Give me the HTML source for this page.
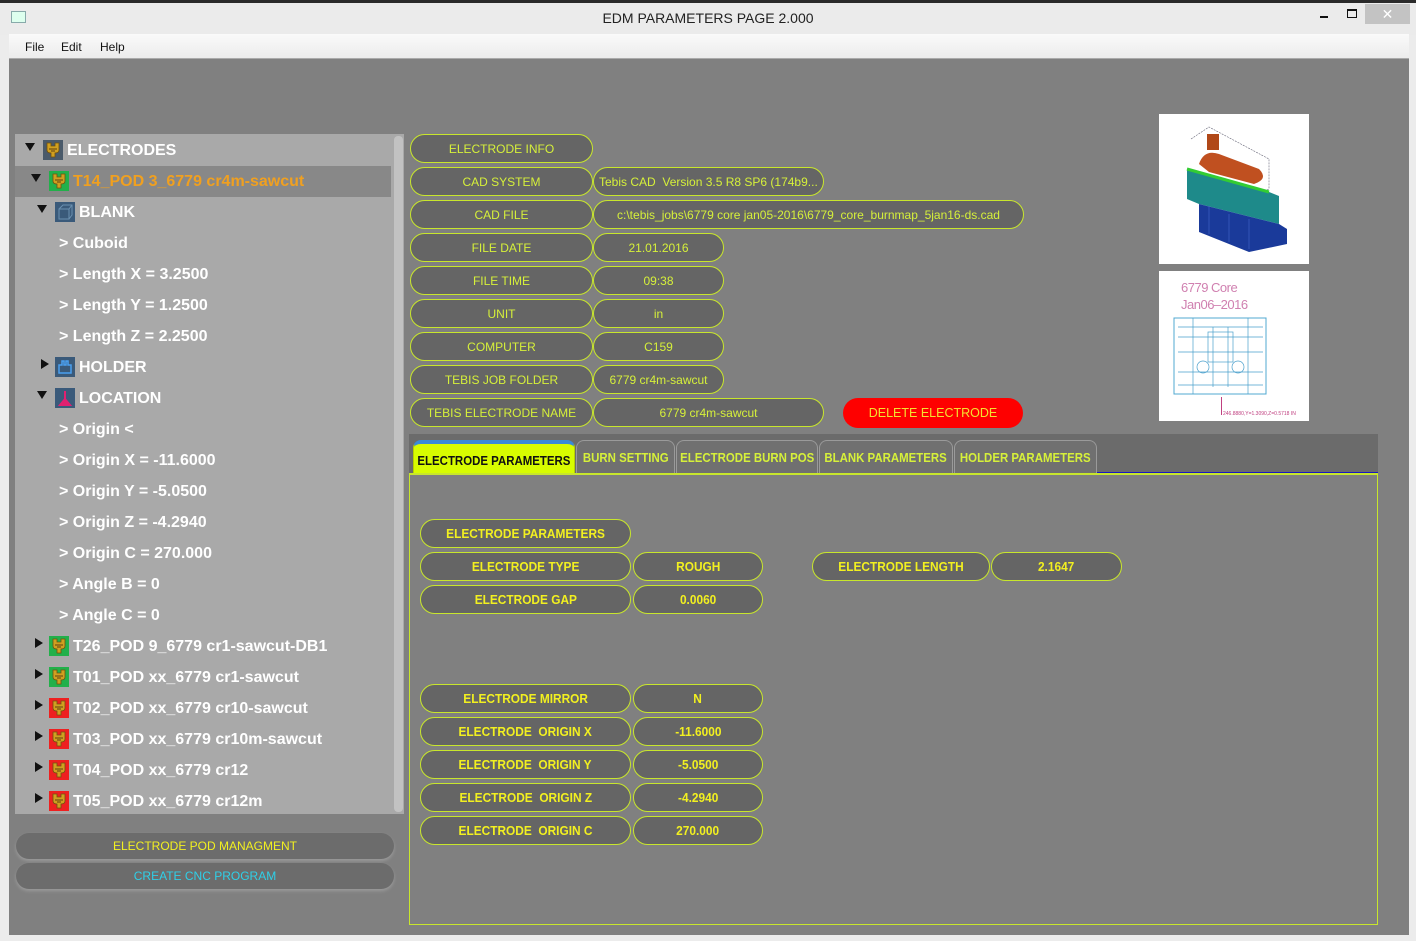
<!DOCTYPE html>
<html><head><meta charset="utf-8">
<style>
*{margin:0;padding:0;box-sizing:border-box}
body{width:1416px;height:941px;overflow:hidden;background:#ececec;font-family:"Liberation Sans",sans-serif;position:relative}
.a{position:absolute}
.btn{position:absolute;height:29px;border:1.5px solid #c8e62c;border-radius:15px;background:#656565;color:#d6f03a;font-size:12px;display:flex;align-items:center;justify-content:center;white-space:nowrap;overflow:hidden}
.pb{position:absolute;height:29px;border:1.5px solid #c8e62c;border-radius:15px;background:#656565;color:#f2f020;font-size:12.5px;font-weight:bold;display:flex;align-items:center;justify-content:center;white-space:nowrap}
.pb span{display:inline-block;transform:scaleX(.95);white-space:nowrap}
.tab span,.tab0 span{display:inline-block;transform:scaleX(.88);white-space:nowrap}
.row{position:absolute;left:0;height:31px;width:376px;display:flex;align-items:center;color:#fff;font-weight:bold;font-size:16px;font-family:"Liberation Sans",sans-serif;white-space:nowrap}
.arr{width:0;height:0;position:absolute}
.ad{border-left:5px solid transparent;border-right:5px solid transparent;border-top:8px solid #111}
.ar{border-top:5px solid transparent;border-bottom:5px solid transparent;border-left:8px solid #111}
.ic{position:absolute;width:20px;height:20px;display:flex;align-items:center;justify-content:center}
.tab{position:absolute;top:440px;height:34px;border:1px solid #9a9a9a;border-bottom:none;border-radius:8px 8px 0 0;background:#707070;color:#d6f03a;font-weight:bold;font-size:13px;display:flex;align-items:center;justify-content:center;white-space:nowrap;overflow:hidden}
.tab0{position:absolute;left:413px;top:440px;width:162px;height:34px;background:#d8fc00;border:1px solid #b8d000;border-radius:8px 8px 0 0;border-top:4px solid #3a8ad8;color:#111;font-weight:bold;font-size:13px;display:flex;align-items:center;justify-content:center;white-space:nowrap;overflow:hidden;padding-top:3px}
</style></head><body>
<div class="a" style="left:0;top:0;width:1416px;height:4px;background:#2a2a2a"></div>
<div class="a" style="left:0;top:3px;width:1416px;height:32px;background:#ebebeb"></div>
<div class="a" style="left:11px;top:11px;width:15px;height:12px;border:1px solid #8aa;background:#dfe"></div>
<div class="a" style="left:0;top:10px;width:1416px;text-align:center;font-size:14px;color:#222">EDM PARAMETERS PAGE 2.000</div>
<div class="a" style="left:1320px;top:16px;width:8px;height:2px;background:#111"></div>
<div class="a" style="left:1347px;top:9px;width:10px;height:9px;border:1.5px solid #111;border-top-width:2.5px"></div>
<div class="a" style="left:1365px;top:4px;width:45px;height:20px;background:#c3c3c3;color:#fff;font-size:14px;text-align:center;line-height:20px">✕</div>
<div class="a" style="left:9px;top:34px;width:1400px;height:25px;background:linear-gradient(#fafafa,#ececec);border-bottom:1px solid #aaa"></div>
<div class="a" style="left:25px;top:40px;font-size:12px;color:#111">File</div>
<div class="a" style="left:61px;top:40px;font-size:12px;color:#111">Edit</div>
<div class="a" style="left:100px;top:40px;font-size:12px;color:#111">Help</div>
<div class="a" style="left:9px;top:59px;width:1400px;height:876px;background:#808080"></div>

<div class="a" style="left:15px;top:134px;width:389px;height:680px;background:#a9a9a9;overflow:hidden">
<div class="a" style="left:379px;top:2px;width:9px;height:676px;background:#c2c2c2;border-radius:4px"></div>
<div class="a" style="left:0;top:32px;width:376px;height:31px;background:#888"></div>
<div id="tree"></div>
</div>

<div class="a" style="left:16px;top:833px;width:378px;height:26px;border-radius:13px;background:#6c6c6c;box-shadow:0 2px 3px #9a9a9a;color:#f2f020;font-size:12px;text-align:center;line-height:26px">ELECTRODE POD MANAGMENT</div>
<div class="a" style="left:16px;top:863px;width:378px;height:26px;border-radius:13px;background:#6c6c6c;box-shadow:0 2px 3px #9a9a9a;color:#2ed0e8;font-size:12px;text-align:center;line-height:26px">CREATE CNC PROGRAM</div>

<div class="btn" style="left:410px;top:134px;width:183px">ELECTRODE INFO</div>
<div class="btn" style="left:410px;top:167px;width:183px">CAD SYSTEM</div>
<div class="btn" style="left:593px;top:167px;width:231px;justify-content:flex-start;padding-left:5px">Tebis CAD&nbsp; Version 3.5 R8 SP6 (174b9...</div>
<div class="btn" style="left:410px;top:200px;width:183px">CAD FILE</div>
<div class="btn" style="left:593px;top:200px;width:431px">c:\tebis_jobs\6779 core jan05-2016\6779_core_burnmap_5jan16-ds.cad</div>
<div class="btn" style="left:410px;top:233px;width:183px">FILE DATE</div>
<div class="btn" style="left:593px;top:233px;width:131px">21.01.2016</div>
<div class="btn" style="left:410px;top:266px;width:183px">FILE TIME</div>
<div class="btn" style="left:593px;top:266px;width:131px">09:38</div>
<div class="btn" style="left:410px;top:299px;width:183px">UNIT</div>
<div class="btn" style="left:593px;top:299px;width:131px">in</div>
<div class="btn" style="left:410px;top:332px;width:183px">COMPUTER</div>
<div class="btn" style="left:593px;top:332px;width:131px">C159</div>
<div class="btn" style="left:410px;top:365px;width:183px">TEBIS JOB FOLDER</div>
<div class="btn" style="left:593px;top:365px;width:131px">6779 cr4m-sawcut</div>
<div class="btn" style="left:410px;top:398px;width:183px">TEBIS ELECTRODE NAME</div>
<div class="btn" style="left:593px;top:398px;width:231px">6779 cr4m-sawcut</div>
<div class="a" style="left:843px;top:398px;width:180px;height:30px;border-radius:15px;background:#fe0000;color:#f4e030;font-size:12.5px;text-align:center;line-height:30px">DELETE ELECTRODE</div>

<div class="a" style="left:1159px;top:114px;width:150px;height:150px;background:#fff">
<svg width="150" height="150" viewBox="0 0 150 150">
<path d="M32 25 L50 13 L110 45 L110 75 L100 80" fill="none" stroke="#667" stroke-width=".6" stroke-dasharray="2 1"/>
<path d="M40 50 Q45 35 60 40 L100 55 Q110 65 95 70 L50 58 Z" fill="#c05020"/>
<rect x="48" y="20" width="12" height="16" fill="#b04818"/>
<path d="M28 55 L110 78 L120 82 L120 110 L40 90 L28 85 Z" fill="#1e8a8a"/>
<path d="M28 55 L110 78" stroke="#3c3" stroke-width="3"/>
<path d="M40 90 L120 110 L128 115 L128 130 L90 138 L40 118 Z" fill="#1a3a9a"/>
<path d="M50 92 L50 120 M70 100 L70 128 M90 105 L90 135" stroke="#4466cc" stroke-width=".6"/>
</svg></div>
<div class="a" style="left:1159px;top:271px;width:150px;height:150px;background:#fff">
<div class="a" style="left:22px;top:8px;color:#d080b0;font-size:13px;line-height:17px;letter-spacing:-0.5px">6779 Core<br>Jan06–2016</div>
<svg class="a" style="left:14px;top:46px" width="100" height="80" viewBox="0 0 100 80">
<rect x="1" y="1" width="92" height="76" fill="none" stroke="#50a8d0" stroke-width="1"/>
<g stroke="#4aa0cc" stroke-width=".7" fill="none">
<path d="M5 10 H90 M5 20 H90 M5 35 H90 M5 55 H90 M5 68 H90 M20 1 V77 M40 10 V70 M55 10 V70 M75 1 V77"/>
<circle cx="30" cy="50" r="6"/><circle cx="65" cy="50" r="6"/><rect x="35" y="15" width="25" height="30"/>
</g></svg>
<div class="a" style="left:62px;top:126px;width:1px;height:18px;background:#c04080"></div>
<div class="a" style="left:64px;top:140px;font-size:5px;color:#c04080">246.8880,Y=1.3090,Z=0.5718 IN</div>
</div>

<div class="a" style="left:409px;top:434px;width:969px;height:40px;background:#6b6b6b"></div>
<div class="a" style="left:1097px;top:472px;width:281px;height:2px;background:#1818c0"></div>
<div class="tab0"><span>ELECTRODE PARAMETERS</span></div>
<div class="tab" style="left:576px;width:99px"><span>BURN SETTING</span></div>
<div class="tab" style="left:676px;width:142px"><span>ELECTRODE BURN POS</span></div>
<div class="tab" style="left:819px;width:134px"><span>BLANK PARAMETERS</span></div>
<div class="tab" style="left:954px;width:143px"><span>HOLDER PARAMETERS</span></div>
<div class="a" style="left:409px;top:473px;width:969px;height:452px;border:1.5px solid #c8e62c;border-top:2px solid #c8e62c"></div>

<div class="pb" style="left:420px;top:519px;width:211px"><span>ELECTRODE PARAMETERS</span></div>
<div class="pb" style="left:420px;top:552px;width:211px"><span>ELECTRODE TYPE</span></div>
<div class="pb" style="left:633px;top:552px;width:130px"><span>ROUGH</span></div>
<div class="pb" style="left:812px;top:552px;width:178px"><span>ELECTRODE LENGTH</span></div>
<div class="pb" style="left:991px;top:552px;width:131px"><span>2.1647</span></div>
<div class="pb" style="left:420px;top:585px;width:211px"><span>ELECTRODE GAP</span></div>
<div class="pb" style="left:633px;top:585px;width:130px"><span>0.0060</span></div>
<div class="pb" style="left:420px;top:684px;width:211px"><span>ELECTRODE MIRROR</span></div>
<div class="pb" style="left:633px;top:684px;width:130px"><span>N</span></div>
<div class="pb" style="left:420px;top:717px;width:211px"><span>ELECTRODE&nbsp; ORIGIN X</span></div>
<div class="pb" style="left:633px;top:717px;width:130px"><span>-11.6000</span></div>
<div class="pb" style="left:420px;top:750px;width:211px"><span>ELECTRODE&nbsp; ORIGIN Y</span></div>
<div class="pb" style="left:633px;top:750px;width:130px"><span>-5.0500</span></div>
<div class="pb" style="left:420px;top:783px;width:211px"><span>ELECTRODE&nbsp; ORIGIN Z</span></div>
<div class="pb" style="left:633px;top:783px;width:130px"><span>-4.2940</span></div>
<div class="pb" style="left:420px;top:816px;width:211px"><span>ELECTRODE&nbsp; ORIGIN C</span></div>
<div class="pb" style="left:633px;top:816px;width:130px"><span>270.000</span></div>

<script>
var ico='<svg width="14" height="16" viewBox="0 0 14 16"><path d="M1 1 H5 V4 H9 V1 H13 V8 Q13 11 9 11 V15 H5 V11 Q1 11 1 8 Z" fill="#d0a020" stroke="#705010" stroke-width=".8"/><path d="M3 7 H11 M5 9 H9" stroke="#604010"/></svg>';
var rows=[
[15,'d',28,'#4a5a6a',ico,'ELECTRODES','#fff'],
[21,'d',34,'#22b04a',ico,'T14_POD 3_6779 cr4m-sawcut','#f0a020'],
[27,'d',40,'#3a5a7a','<svg width="16" height="16"><rect x="2" y="5" width="10" height="10" fill="none" stroke="#6a90b0"/><path d="M2 5 L6 1 H15 V11 L12 15 M12 5 L15 1" fill="none" stroke="#6a90b0"/></svg>','BLANK','#fff'],
[44,null,0,null,null,'&gt; Cuboid','#fff'],
[44,null,0,null,null,'&gt; Length X = 3.2500','#fff'],
[44,null,0,null,null,'&gt; Length Y = 1.2500','#fff'],
[44,null,0,null,null,'&gt; Length Z = 2.2500','#fff'],
[27,'r',40,'#3a5a7a','<svg width="16" height="16"><path d="M2 14 V6 H5 V2 H7 V6 H9 V2 H11 V6 H14 V14 Z" fill="none" stroke="#4aa0f0" stroke-width="1.5"/></svg>','HOLDER','#fff'],
[27,'d',40,'#3a5a7a','<svg width="16" height="16"><path d="M8 1 V10 M3 15 L8 9 L13 15 Z" stroke="#e02070" fill="#e02070" stroke-width="2"/></svg>','LOCATION','#fff'],
[44,null,0,null,null,'&gt; Origin &lt;','#fff'],
[44,null,0,null,null,'&gt; Origin X = -11.6000','#fff'],
[44,null,0,null,null,'&gt; Origin Y = -5.0500','#fff'],
[44,null,0,null,null,'&gt; Origin Z = -4.2940','#fff'],
[44,null,0,null,null,'&gt; Origin C = 270.000','#fff'],
[44,null,0,null,null,'&gt; Angle B = 0','#fff'],
[44,null,0,null,null,'&gt; Angle C = 0','#fff'],
[21,'r',34,'#22b04a',ico,'T26_POD 9_6779 cr1-sawcut-DB1','#fff'],
[21,'r',34,'#22b04a',ico,'T01_POD xx_6779 cr1-sawcut','#fff'],
[21,'r',34,'#ee2020',ico,'T02_POD xx_6779 cr10-sawcut','#fff'],
[21,'r',34,'#ee2020',ico,'T03_POD xx_6779 cr10m-sawcut','#fff'],
[21,'r',34,'#ee2020',ico,'T04_POD xx_6779 cr12','#fff'],
[21,'r',34,'#ee2020',ico,'T05_POD xx_6779 cr12m','#fff']];
var h='';
rows.forEach(function(r,i){
 var top=i*31+1;
 h+='<div class="row" style="top:'+top+'px">';
 if(r[1]) h+='<div class="arr '+(r[1]=='d'?'ad':'ar')+'" style="left:'+(r[0]-(r[1]=='d'?5:1))+'px;top:'+(r[1]=='d'?8:7)+'px"></div>';
 var tx;
 if(r[3]){h+='<div class="ic" style="left:'+r[2]+'px;top:5px;background:'+r[3]+'">'+r[4]+'</div>';tx=r[2]+24;}
 else tx=r[0];
 h+='<span style="position:absolute;left:'+tx+'px;color:'+r[6]+'">'+r[5]+'</span></div>';
});
document.getElementById('tree').innerHTML=h;
</script>
</body></html>
